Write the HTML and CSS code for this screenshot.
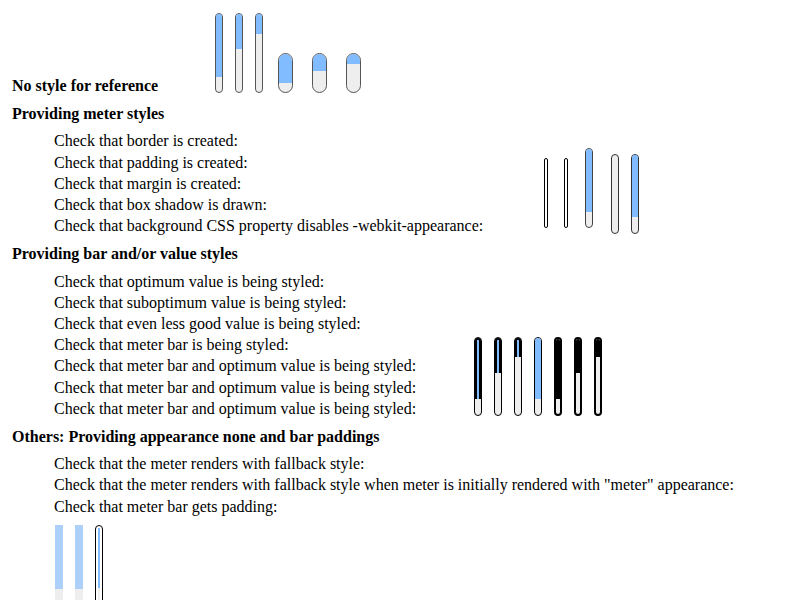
FILE: index.html
```html
<!DOCTYPE html>
<html lang="en">
<head>
  <meta charset="UTF-8" />
  <title>Meter styles</title>
  <link rel="stylesheet" href="styles.css">
</head>
<body>

  <div class="row top">
    <b class="label">No style for reference</b><span class="meters">
      <span class="m"><span class="fill" style="height:63px"></span></span>
      <span class="m"><span class="fill" style="height:35px"></span></span>
      <span class="m gap"><span class="fill" style="height:20px"></span></span>
      <span class="m short"><span class="fill" style="height:29px"></span></span>
      <span class="m short"><span class="fill" style="height:17px"></span></span>
      <span class="m short"><span class="fill" style="height:10px"></span></span>
    </span>
  </div>

  <h3 class="title">Providing meter styles</h3>
  <div class="row">
    <div class="list wide">
      <div>Check that border is created:</div>
      <div>Check that padding is created:</div>
      <div>Check that margin is created:</div>
      <div>Check that box shadow is drawn:</div>
      <div>Check that background CSS property disables -webkit-appearance:</div>
    </div><span class="meters">
      <span class="m thin"></span>
      <span class="m thin second"></span>
      <span class="m raised"><span class="fill" style="height:63px"></span></span>
      <span class="m sunk"></span>
      <span class="m sunk last"><span class="fill" style="height:62px"></span></span>
    </span>
  </div>

  <h3 class="title">Providing bar and/or value styles</h3>
  <div class="row">
    <div class="list narrow">
      <div>Check that optimum value is being styled:</div>
      <div>Check that suboptimum value is being styled:</div>
      <div>Check that even less good value is being styled:</div>
      <div>Check that meter bar is being styled:</div>
      <div>Check that meter bar and optimum value is being styled:</div>
      <div>Check that meter bar and optimum value is being styled:</div>
      <div>Check that meter bar and optimum value is being styled:</div>
    </div><span class="meters">
      <span class="m dark"><span class="fill stripe" style="height:61px"></span></span>
      <span class="m dark"><span class="fill stripe" style="height:35px"></span></span>
      <span class="m dark"><span class="fill stripe" style="height:19px"></span></span>
      <span class="m dark"><span class="fill" style="height:61px"></span></span>
      <span class="m dark heavy"><span class="fill black" style="height:60px"></span></span>
      <span class="m dark heavy"><span class="fill black" style="height:34px"></span></span>
      <span class="m dark heavy"><span class="fill black" style="height:18px"></span></span>
    </span>
  </div>

  <h3 class="title">Others: Providing appearance none and bar paddings</h3>
  <div class="list">
    <div>Check that the meter renders with fallback style:</div>
    <div>Check that the meter renders with fallback style when meter is initially rendered with "meter" appearance:</div>
    <div>Check that meter bar gets padding:</div>
  </div>
  <div class="row bottom">
    <span class="meters">
      <span class="m plain"><span class="fill" style="height:64px"></span></span>
      <span class="m plain"><span class="fill" style="height:64px"></span></span>
      <span class="m padded"><span class="track"><span class="fill" style="height:60px"></span></span></span>
    </span>
  </div>

</body>
</html>
```

FILE: styles.css
```css
* {
  box-sizing: border-box;
}
html {
  overflow-y: scroll;
}
body {
  font-family: "Liberation Serif", "Times New Roman", serif;
  font-size: 16px;
  line-height: 21.2px;
  margin: 0;
  padding: 13px 12px 12px;
  color: #000;
  background: #fff;
}
.row {
  font-size: 0;
  line-height: 0;
}
.label {
  display: inline-block;
  width: 203px;
  font-size: 16px;
  line-height: 21.2px;
}
.title {
  font-size: 16px;
  margin: 7px 0 6px;
}
.list {
  display: inline-block;
  margin-left: 42px;
  font-size: 16px;
  line-height: 21.2px;
  white-space: nowrap;
}
.list.wide {
  width: 490px;
}
.list.narrow {
  width: 420px;
}
.meters {
  display: inline-block;
  font-size: 0;
  line-height: 0;
}

/* meter */
.m {
  display: inline-block;
  vertical-align: -2px;
  width: 8px;
  height: 80px;
  margin-right: 12px;
  border: 1px solid #555;
  border-radius: 4px;
  background: #eee;
  overflow: hidden;
}
.fill {
  display: block;
  background: #80bcff;
}
.m.gap {
  margin-right: 15px;
}
.m.short {
  width: 15px;
  height: 40px;
  border-radius: 8px;
  margin-right: 19px;
}

/* meter styles */
.m.thin {
  width: 4px;
  height: 70px;
  border-color: #000;
  border-radius: 2px;
  background: #fff;
  vertical-align: 3px;
  margin-right: 16px;
}
.m.thin.second {
  margin-right: 17px;
}
.m.raised {
  vertical-align: 3px;
  border-color: #444;
  margin-right: 18px;
}
.m.sunk {
  vertical-align: -3px;
  border-color: #333;
}
.m.sunk.last {
  margin-right: 0;
}

/* bar and value styles */
.m.dark {
  height: 79px;
  border-color: #000;
}
.fill.stripe {
  border: 2px solid #000;
  border-bottom: 0;
}
.m.heavy {
  border-width: 2px;
}
.fill.black {
  background: #000;
}

/* fallback and padding */
.row.bottom {
  margin-top: 8px;
  padding-left: 43px;
}
.m.plain {
  border: 0;
  border-radius: 0;
}
.m.plain .fill {
  background: #acd0fa;
}
.m.padded {
  border-color: #000;
  background: #fff;
  padding: 2px;
}
.track {
  display: block;
  height: 100%;
  background: #eee;
}
```
